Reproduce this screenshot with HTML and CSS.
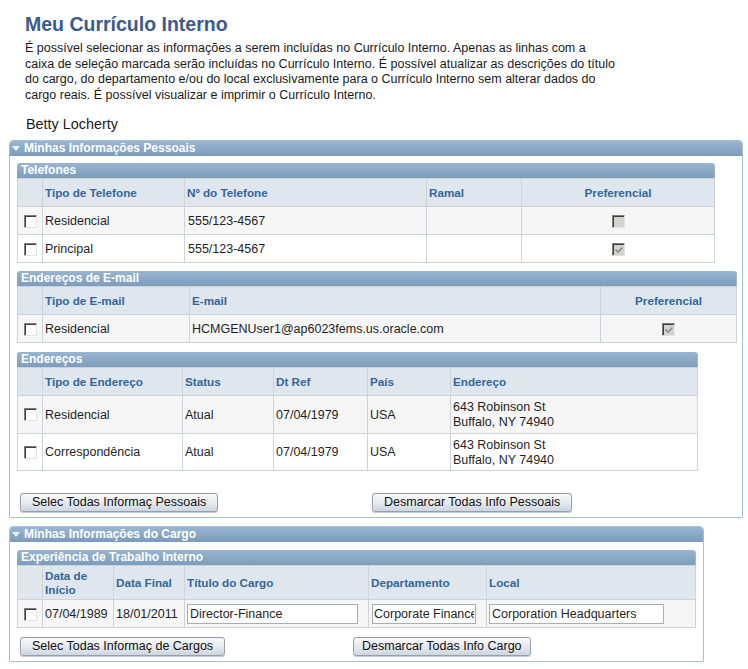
FILE: index.html
```html
<!DOCTYPE html>
<html lang="pt">
<head>
<meta charset="utf-8">
<title>Meu Currículo Interno</title>
<link rel="stylesheet" href="styles.css">
</head>
<body>
<div class="page">
  <h1 class="title">Meu Currículo Interno</h1>
  <p class="instr">É possível selecionar as informações a serem incluídas no Currículo Interno. Apenas as linhas com a<br>caixa de seleção marcada serão incluídas no Currículo Interno. É possível atualizar as descrições do título<br>do cargo, do departamento e/ou do local exclusivamente para o Currículo Interno sem alterar dados do<br>cargo reais. É possível visualizar e imprimir o Currículo Interno.</p>
  <div class="name">Betty Locherty</div>

  <section class="sect sect-p">
    <div class="sect-hd"><span class="arrow"></span>Minhas Informações Pessoais</div>
    <div class="sect-body">
      <div class="grp g-tel">
        <div class="grp-hd">Telefones</div>
        <table class="grid">
          <colgroup><col class="c-chk"><col class="c-tel1"><col class="c-tel2"><col class="c-tel3"><col class="c-tel4"></colgroup>
          <tr class="hrow"><th></th><th>Tipo de Telefone</th><th>Nº do Telefone</th><th>Ramal</th><th class="ctr">Preferencial</th></tr>
          <tr class="odd"><td class="ctr"><span class="cb"></span></td><td>Residencial</td><td class="pl">555/123-4567</td><td></td><td class="ctr"><span class="cb dis"></span></td></tr>
          <tr><td class="ctr"><span class="cb"></span></td><td>Principal</td><td class="pl">555/123-4567</td><td></td><td class="ctr"><span class="cb dis"><svg class="tick" viewBox="0 0 10 10" width="10" height="10"><path d="M1.5 4.5 L4 7 L8.5 2.5" stroke="#8e8e8e" stroke-width="1.7" fill="none"/></svg></span></td></tr>
        </table>
      </div>

      <div class="grp g-mail">
        <div class="grp-hd">Endereços de E-mail</div>
        <table class="grid">
          <colgroup><col class="c-chk"><col class="c-m1"><col class="c-m2"><col class="c-m3"></colgroup>
          <tr class="hrow"><th></th><th>Tipo de E-mail</th><th>E-mail</th><th class="ctr">Preferencial</th></tr>
          <tr class="odd"><td class="ctr"><span class="cb"></span></td><td>Residencial</td><td>HCMGENUser1@ap6023fems.us.oracle.com</td><td class="ctr"><span class="cb dis"><svg class="tick" viewBox="0 0 10 10" width="10" height="10"><path d="M1.5 4.5 L4 7 L8.5 2.5" stroke="#8e8e8e" stroke-width="1.7" fill="none"/></svg></span></td></tr>
        </table>
      </div>

      <div class="grp g-addr">
        <div class="grp-hd">Endereços</div>
        <table class="grid">
          <colgroup><col class="c-chk"><col class="c-a1"><col class="c-a2"><col class="c-a3"><col class="c-a4"><col class="c-a5"></colgroup>
          <tr class="hrow"><th></th><th>Tipo de Endereço</th><th>Status</th><th>Dt Ref</th><th>País</th><th>Endereço</th></tr>
          <tr class="odd arow"><td class="ctr"><span class="cb"></span></td><td>Residencial</td><td>Atual</td><td>07/04/1979</td><td>USA</td><td>643 Robinson St<br>Buffalo, NY 74940</td></tr>
          <tr class="arow"><td class="ctr"><span class="cb"></span></td><td>Correspondência</td><td>Atual</td><td>07/04/1979</td><td>USA</td><td>643 Robinson St<br>Buffalo, NY 74940</td></tr>
        </table>
      </div>

      <div class="btnrow btnrow-p">
        <span><button class="btn" type="button">Selec Todas Informaç Pessoais</button></span>
        <span><button class="btn" type="button">Desmarcar Todas Info Pessoais</button></span>
      </div>
    </div>
  </section>

  <section class="sect sect-c">
    <div class="sect-hd"><span class="arrow"></span>Minhas Informações do Cargo</div>
    <div class="sect-body">
      <div class="grp g-job">
        <div class="grp-hd">Experiência de Trabalho Interno</div>
        <table class="grid">
          <colgroup><col class="c-chk"><col class="c-j1"><col class="c-j2"><col class="c-j3"><col class="c-j4"><col class="c-j5"></colgroup>
          <tr class="hrow jhead"><th></th><th>Data de<br>Início</th><th>Data Final</th><th>Título do Cargo</th><th>Departamento</th><th>Local</th></tr>
          <tr class="odd"><td class="ctr"><span class="cb"></span></td><td>07/04/1989</td><td>18/01/2011</td><td><input class="inp inp-t" type="text" value="Director-Finance"></td><td class="pl"><input class="inp inp-d" type="text" value="Corporate Finance"></td><td><input class="inp inp-l" type="text" value="Corporation Headquarters"></td></tr>
        </table>
      </div>

      <div class="btnrow btnrow-c">
        <span><button class="btn" type="button">Selec Todas Informaç de Cargos</button></span>
        <span><button class="btn btn-tight" type="button">Desmarcar Todas Info Cargo</button></span>
      </div>
    </div>
  </section>
</div>
</body>
</html>
```

FILE: styles.css
```css
* { box-sizing: border-box; }

body {
  margin: 0;
  background: #fff;
  color: #1f1f1f;
  font-family: "Liberation Sans", Arial, sans-serif;
  font-size: 12px;
}

.page { padding: 13px 0 0 9px; }

.title {
  margin: 0 0 6px 16px;
  font-size: 19.5px;
  line-height: 22px;
  font-weight: bold;
  color: #3b5b8e;
}

.instr {
  margin: 0 0 0 16px;
  font-size: 12.5px;
  line-height: 15.6px;
  color: #1a1a1a;
}

.name {
  margin: 13px 0 0 17px;
  font-size: 14.4px;
  line-height: 17px;
  color: #1a1a1a;
}

.sect {
  border: 1px solid #a5c0da;
  border-radius: 4px 4px 0 0;
  margin-top: 7px;
}
.sect-p { width: 734px; }
.sect-c { width: 695px; margin-top: 8px; }

.sect-hd {
  height: 15px;
  line-height: 15px;
  padding-left: 2px;
  background: linear-gradient(#9ab6d1, #7b9bbc);
  color: #fff;
  font-weight: bold;
  font-size: 12px;
  border-radius: 3px 3px 0 0;
}

.arrow {
  display: inline-block;
  width: 0;
  height: 0;
  border-left: 4.5px solid transparent;
  border-right: 4.5px solid transparent;
  border-top: 5px solid #eef3f8;
  vertical-align: 1px;
  margin-right: 4px;
}

.sect-body { padding: 7px 0 5px 7px; }
.sect-c .sect-body { padding-top: 8px; }

.grp { margin-bottom: 8px; }
.g-mail { margin-bottom: 9px; }

.grp-hd {
  height: 15px;
  line-height: 15px;
  padding-left: 4px;
  background: linear-gradient(#98b5d0, #7d9dbd);
  color: #fff;
  font-weight: bold;
  font-size: 12px;
  border-radius: 3px 3px 0 0;
  box-shadow: 1px 0 0 #a9b3bd;
}

.grid {
  width: 100%;
  border-collapse: collapse;
  table-layout: fixed;
  border: 1px solid #b9c1c9;
}
.grid th, .grid td {
  border: 1px solid #cfd3d8;
  padding: 0 2px;
  height: 28px;
  text-align: left;
  vertical-align: middle;
  white-space: nowrap;
}
.grid th {
  background: #dfe6ed;
  color: #33669c;
  font-weight: bold;
  font-size: 11.7px;
  line-height: 14px;
}
.grid td {
  font-size: 12.5px;
  line-height: 15px;
  color: #1f1f1f;
  background: #fff;
  padding-top: 1px;
}
.grid .odd td { background: #f6f6f6; }
.grid .ctr { text-align: center; padding-top: 0; }
.grid .pl { padding-left: 3px; }
.grid .arow td { height: 37.5px; }
.grid .jhead th { height: 34px; white-space: normal; padding-top: 1px; }

/* Group widths */
.g-tel  { width: 697px; }
.g-mail { width: 719px; }
.g-addr { width: 680px; }
.g-job  { width: 678px; }

/* Column widths */
.c-chk { width: 25px; }
.c-tel1 { width: 142px; } .c-tel2 { width: 242px; } .c-tel3 { width: 95px; } .c-tel4 { width: 193px; }
.c-m1 { width: 147px; } .c-m2 { width: 411px; } .c-m3 { width: 136px; }
.c-a1 { width: 140px; } .c-a2 { width: 91px; } .c-a3 { width: 94px; } .c-a4 { width: 83px; } .c-a5 { width: 247px; }
.c-j1 { width: 71px; } .c-j2 { width: 71px; } .c-j3 { width: 184px; } .c-j4 { width: 118px; } .c-j5 { width: 209px; }

/* Checkboxes */
.cb {
  display: inline-block;
  width: 13px;
  height: 13px;
  background: #fff;
  border: 1px solid;
  border-color: #7e7e7e #e4e4e4 #e4e4e4 #7e7e7e;
  box-shadow: inset 1px 1px 0 #3e3e3e;
  vertical-align: middle;
  position: relative;
}
.cb.dis { background: #d6d3ce; }
.tick { position: absolute; left: 1px; top: 1px; }

/* Inputs */
.inp {
  height: 20px;
  border: 1px solid #a9aeb3;
  background: #fff;
  padding: 0 2px;
  font: 12.5px "Liberation Sans", Arial, sans-serif;
  color: #1f1f1f;
  vertical-align: middle;
}
.inp-t { width: 171px; }
.inp-d { width: 104px; padding: 0 1px; }
.inp-l { width: 175px; }

/* Buttons */
.btnrow { display: grid; padding-left: 3px; }
.btnrow-p { grid-template-columns: 352px auto; margin-top: 22px; }
.btnrow-c { grid-template-columns: 333px auto; margin-top: 9px; }

.btn {
  height: 19px;
  padding: 0 11px;
  border: 1px solid #979ea7;
  border-radius: 3px;
  background: linear-gradient(#f8f9fb, #e8ecf0 45%, #cdd6e0);
  box-shadow: 0 1px 0 #c6ccd3;
  font: 12.5px "Liberation Sans", Arial, sans-serif;
  color: #111;
  line-height: 17px;
}
.btn-tight { padding: 0 8px; }
```
